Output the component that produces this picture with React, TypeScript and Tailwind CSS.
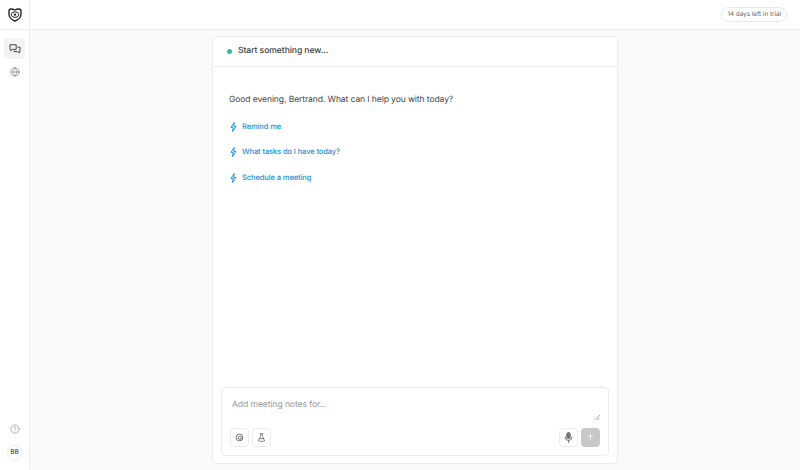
import { ArrowUp, CircleHelp, FlaskConical, Globe } from "lucide-react";

const FONT = "font-['Inter','Noto_Sans',sans-serif] [text-rendering:geometricPrecision]";

const prompts = ["Remind me", "What tasks do I have today?", "Schedule a meeting"];

function Logo() {
  return (
    <svg width="14" height="14" viewBox="0 0 14 14" fill="none" stroke="#222" strokeWidth="1.4">
      <path d="M3 1c1.500 0 2.800 .3 4 1 1.200-.7 2.500-1 4-1 1.300 0 2 .8 2 2v3.200c0 3-3 5.800-6 6.800-3-1-6-3.800-6-6.800V3c0-1.200 .7-2 2-2Z" />
      <ellipse cx="7" cy="6.600" rx="3.800" ry="2.800" strokeWidth="1" />
      <circle cx="7" cy="6.600" r="1.200" fill="#222" stroke="none" />
    </svg>
  );
}

function Bubbles() {
  return (
    <svg width="12" height="10" viewBox="0 0 12 10" fill="none" stroke="#444" strokeWidth="1" strokeLinejoin="round">
      <path d="M1 .8h6.200v4.600H3.400L1.800 6.800V5.400H1Z" />
      <path d="M8.600 3.200H11v4.400h-.8V9L8.600 7.600H5V6.600" />
    </svg>
  );
}

function Bolt() {
  return (
    <svg width="7" height="10" viewBox="0 0 7 10" fill="none" stroke="#1f8fd6" strokeWidth="1" strokeLinejoin="round" className="ml-[1px] mr-[5px] shrink-0">
      <path d="M4.200 .5 1 5.400h2.100L2.600 9.500 6 4.400H3.800Z" />
    </svg>
  );
}

function MicIcon() {
  return (
    <svg width="9" height="11" viewBox="0 0 9 11" fill="none" stroke="#777" strokeWidth="1" strokeLinecap="round">
      <rect x="2.700" y=".5" width="3.600" height="6.200" rx="1.800" fill="#777" />
      <path d="M1 5a3.500 3.500 0 0 0 7 0M4.500 8.500v2" />
    </svg>
  );
}

export default function App() {
  return (
    <div className={`flex h-[470px] w-[800px] overflow-hidden bg-[#fafafa] ${FONT}`}>
      {/* SIDEBAR */}
      <aside className="flex w-[30px] shrink-0 flex-col items-center border-r border-[#ececec] bg-white">
        <div className="flex h-[30px] w-full items-center justify-center border-b border-[#ececec]">
          <Logo />
        </div>
        <div className="mt-2 flex h-[21px] w-[21px] items-center justify-center rounded bg-[#f3f3f3]">
          <Bubbles />
        </div>
        <Globe size={10} strokeWidth={1.5} className="mt-[8px] text-[#777]" />
        <CircleHelp size={10} strokeWidth={1.5} className="mt-auto text-[#888]" />
        <div className="mb-[9px] mt-[11px] flex h-[16px] w-[16px] items-center justify-center rounded-full border border-[#eee] text-[6.500px] font-medium text-[#555]">
          BB
        </div>
      </aside>

      <div className="flex min-w-0 flex-1 flex-col">
        {/* TOP BAR */}
        <header className="flex h-[30px] shrink-0 items-center justify-end border-b border-[#ececec] bg-white pr-[13px]">
          <div className="flex h-[15px] items-center rounded-full border border-[#e8e8e8] px-[5px] text-[6.300px] text-[#666]">
            14 days left in trial
          </div>
        </header>

        {/* CHAT CARD */}
        <main className="ml-[182px] mt-[6px] mb-[6px] flex w-[406px] flex-1 flex-col rounded border border-[#ececec] bg-white">
          <div className="flex h-[30px] shrink-0 items-center border-b border-[#ececec] pl-[14px]">
            <span className="h-[5px] w-[5px] rounded-full bg-[#2cc08f]" />
            <span className="ml-[6px] text-[8.600px] font-medium tracking-[-0.08px] text-[#3a3a3a]">Start something new...</span>
          </div>

          <div className="flex-1 px-[16px] pt-[27px]">
            <p className="text-[8.600px] leading-[12px] tracking-[-0.12px] text-[#4a4a4a]">
              Good evening, Bertrand. What can I help you with today?
            </p>
            <ul className="mt-[15px] flex flex-col gap-[14.500px]">
              {prompts.map((p) => (
                <li key={p} className="flex h-[11px] items-center text-[7.600px] font-medium tracking-[-0.14px] text-[#1f8fd6]">
                  <Bolt />
                  {p}
                </li>
              ))}
            </ul>
          </div>

          {/* COMPOSER */}
          <div className="relative mx-[8px] mb-[7px] flex h-[69px] flex-col rounded border border-[#ececec] px-[8px] pb-[8px] pt-[11px]">
            <span className="pl-[2px] text-[8.600px] leading-[12px] tracking-[-0.1px] text-[#999]">Add meeting notes for...</span>
            <div className="mt-auto flex items-center gap-[3px]">
              <button className="flex h-[19px] w-[19px] items-center justify-center rounded border border-[#ececec]">
                <svg width="9" height="9" viewBox="0 0 24 24" fill="none" stroke="#666" strokeWidth="2.500">
                  <circle cx="12" cy="12" r="9" />
                  <circle cx="13" cy="13" r="4" />
                </svg>
              </button>
              <button className="flex h-[19px] w-[19px] items-center justify-center rounded border border-[#ececec]">
                <FlaskConical size={9} strokeWidth={1.8} className="text-[#555]" />
              </button>
              <button className="ml-auto flex h-[19px] w-[19px] items-center justify-center rounded border border-[#ececec]">
                <MicIcon />
              </button>
              <button className="flex h-[19px] w-[19px] items-center justify-center rounded bg-[#c8c8c8]">
                <ArrowUp size={9} strokeWidth={1.8} className="text-white" />
              </button>
            </div>
            <svg width="5" height="5" viewBox="0 0 5 5" className="absolute right-[8px] top-[27px]" stroke="#888" strokeWidth="0.7">
              <path d="M0 5 5 0M2.500 5 5 2.500" />
            </svg>
          </div>
        </main>
      </div>
    </div>
  );
}
